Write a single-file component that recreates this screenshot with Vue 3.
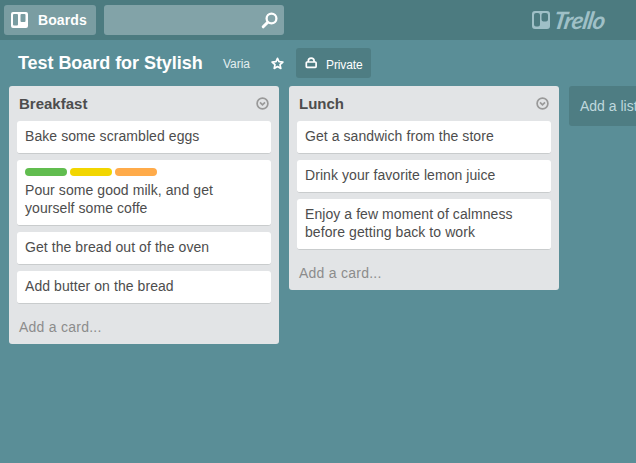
<script setup>
const lists = [
  {
    title: 'Breakfast',
    cards: [
      { text: 'Bake some scrambled eggs' },
      { text: 'Pour some good milk, and get yourself some coffe', labels: ['green', 'yellow', 'orange'] },
      { text: 'Get the bread out of the oven' },
      { text: 'Add butter on the bread' },
    ],
  },
  {
    title: 'Lunch',
    cards: [
      { text: 'Get a sandwich from the store' },
      { text: 'Drink your favorite lemon juice' },
      { text: 'Enjoy a few moment of calmness before getting back to work' },
    ],
  },
]
</script>

<template>
  <div class="page">
    <header class="topbar">
      <button class="boards">
        <svg width="17" height="17" viewBox="0 0 17 17">
          <path fill="currentColor" fill-rule="evenodd" d="M2 0h13a2 2 0 0 1 2 2v12a2 2 0 0 1-2 2H2a2 2 0 0 1-2-2V2a2 2 0 0 1 2-2ZM3 2a1 1 0 0 0-1 1v9.500a1 1 0 0 0 1 1h3a1 1 0 0 0 1-1V3a1 1 0 0 0-1-1ZM10.500 2a1 1 0 0 0-1 1v6a1 1 0 0 0 1 1h3a1 1 0 0 0 1-1V3a1 1 0 0 0-1-1Z" />
        </svg>
        <span>Boards</span>
      </button>
      <div class="search">
        <svg width="17" height="17" viewBox="0 0 17 17" fill="none" stroke="currentColor">
          <circle cx="10.500" cy="6.500" r="4.900" stroke-width="2.300" />
          <path d="M6.500 10.500 2.200 14.800" stroke-width="3" stroke-linecap="round" />
        </svg>
      </div>
      <div class="logo">
        <svg width="18" height="18" viewBox="0 0 18 18">
          <path fill="currentColor" fill-rule="evenodd" d="M3 0h12a3 3 0 0 1 3 3v12a3 3 0 0 1-3 3H3a3 3 0 0 1-3-3V3a3 3 0 0 1 3-3ZM4 2a2 2 0 0 0-2 2v9.500a2 2 0 0 0 2 2h2a2 2 0 0 0 2-2V4a2 2 0 0 0-2-2ZM11.500 2a2 2 0 0 0-2 2v4.500a2 2 0 0 0 2 2h2.500a2 2 0 0 0 2-2V4a2 2 0 0 0-2-2Z" />
        </svg>
        <span class="wordmark">Trello</span>
      </div>
    </header>

    <div class="board-head">
      <h1>Test Board for Stylish</h1>
      <span class="org">Varia</span>
      <svg class="star" width="13" height="13" viewBox="0 0 13 13">
        <path d="M6.500 1.300 8 4.600l3.900.4-2.900 2.600.8 3.800-3.300-1.900-3.300 1.900.8-3.800-2.900-2.600 3.900-.4Z" fill="none" stroke="currentColor" stroke-width="1.700" stroke-linejoin="round" />
      </svg>
      <button class="private">
        <svg width="12" height="12" viewBox="0 0 12 12" fill="none" stroke="currentColor" stroke-width="1.700">
          <rect x="1.300" y="5" width="9.800" height="5.300" rx=".7" />
          <path d="M3.300 5V4a2.900 2.900 0 0 1 5.800 0V5" />
        </svg>
        <span>Private</span>
      </button>
    </div>

    <main class="board">
      <section v-for="list in lists" :key="list.title" class="list">
        <div class="list-head">
          <h2>{{ list.title }}</h2>
          <svg width="13" height="13" viewBox="0 0 13 13" fill="none" stroke="currentColor">
            <circle cx="6.500" cy="6.500" r="5.400" stroke-width="1.700" />
            <path d="m4 5.300 2.500 2.500L9 5.300" stroke-width="1.700" />
          </svg>
        </div>
        <div class="cards">
          <article v-for="card in list.cards" :key="card.text" class="card">
            <div v-if="card.labels" class="labels">
              <i v-for="label in card.labels" :key="label" :class="label"></i>
            </div>
            <p>{{ card.text }}</p>
          </article>
        </div>
        <a class="add-card">Add a card...</a>
      </section>
      <div class="add-list">Add a list...</div>
    </main>
  </div>
</template>

<style>
body {
  overflow: hidden;
}
</style>

<style scoped>
.page {
  width: 100%;
  height: 463px;
  overflow: hidden;
  background: #5a8e97;
  font-family: "Liberation Sans", Arial, sans-serif;
  font-size: 14px;
  line-height: 18px;
  color: #4d4d4d;
}
h1, h2, p { margin: 0; }
svg { display: block; flex: none; }
button {
  border: 0;
  font-family: inherit;
  color: #fff;
}
.topbar {
  box-sizing: border-box;
  display: flex;
  align-items: center;
  height: 40px;
  padding: 0 28px 0 4px;
  background: #4c7b80;
}
.boards {
  display: flex;
  align-items: center;
  gap: 10px;
  box-sizing: border-box;
  width: 92px;
  height: 30px;
  padding: 0 0 0 7px;
  border-radius: 3px;
  background: #7a9da2;
  font-size: 14px;
  font-weight: bold;
  letter-spacing: 0.1px;
}
.search {
  display: flex;
  align-items: center;
  justify-content: flex-end;
  box-sizing: border-box;
  width: 180px;
  height: 30px;
  margin-left: 8px;
  padding-right: 6px;
  border-radius: 3px;
  background: #82a3a8;
  color: #fff;
}
.logo {
  display: flex;
  align-items: center;
  gap: 4px;
  margin-left: auto;
  color: #9fc0c7;
}
.wordmark {
  width: 54px;
  font-family: Lato, sans-serif;
  font-size: 24px;
  font-style: italic;
  font-weight: 700;
  line-height: 24px;
  letter-spacing: -0.7px;
  transform: skewX(-10deg);
}
.board-head {
  display: flex;
  align-items: center;
  height: 30px;
  padding: 8px 0 8px 18px;
  color: #fff;
}
h1 {
  width: 205px;
  font-size: 18px;
  line-height: 22px;
  letter-spacing: -0.05px;
  white-space: nowrap;
}
.org {
  width: 48px;
  padding-top: 2px;
  font-size: 12px;
  letter-spacing: -0.05px;
  color: #e3eef0;
}
.private {
  display: flex;
  align-items: center;
  gap: 9px;
  box-sizing: border-box;
  width: 75px;
  height: 30px;
  margin-left: 12px;
  padding: 0 0 0 9px;
  border-radius: 3px;
  background: #4e7d83;
  font-size: 12px;
  letter-spacing: -0.1px;
}
.private span { padding-top: 3px; }
.board {
  display: flex;
  align-items: flex-start;
  gap: 10px;
  padding-left: 9px;
}
.list {
  flex: none;
  box-sizing: border-box;
  width: 270px;
  padding: 0 8px 8px;
  border-radius: 3px;
  background: #e2e4e6;
}
.list-head {
  display: flex;
  align-items: center;
  justify-content: space-between;
  height: 35px;
  padding: 0 2px;
  color: #999;
}
h2 {
  font-size: 15px;
  line-height: 18px;
  color: #4d4d4d;
}
.cards {
  display: flex;
  flex-direction: column;
  gap: 6px;
}
.card {
  padding: 6px 8px 8px;
  border-bottom: 1px solid #c9cccd;
  border-radius: 3px;
  background: #fff;
}
.card p { letter-spacing: 0.07px; }
.labels {
  display: flex;
  gap: 3px;
  padding: 2px 0 5px;
}
.labels i {
  width: 42px;
  height: 8px;
  border-radius: 4px;
}
.green { background: #61bd4f; }
.yellow { background: #f2d600; }
.orange { background: #ffab4a; }
.add-card {
  display: block;
  padding: 14px 2px 0;
  letter-spacing: 0.25px;
  color: #8c8c8c;
}
.add-list {
  flex: none;
  box-sizing: border-box;
  width: 270px;
  height: 40px;
  padding: 11px;
  border-radius: 3px;
  background: #4e7d83;
  color: #bfd8dd;
}
</style>
